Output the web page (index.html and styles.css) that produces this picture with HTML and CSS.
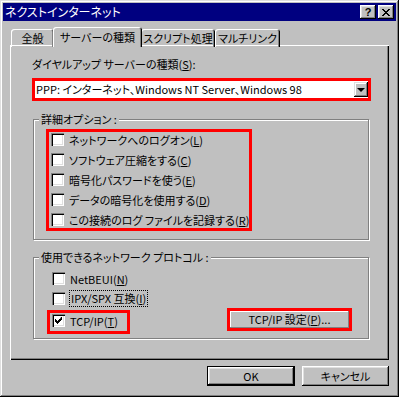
FILE: index.html
```html
<!DOCTYPE html>
<html lang="ja">
<head>
<meta charset="UTF-8">
<title>ネクストインターネット</title>
<link rel="stylesheet" href="styles.css">
</head>
<body>
<div class="window">
  <div class="titlebar">
    <span class="title">ネクストインターネット</span>
    <div class="caption-buttons">
      <span class="cap-btn help">?</span>
      <span class="cap-btn close">
        <svg width="8" height="7" viewBox="0 0 8 7"><path d="M0 0h2v1h1v1h2v-1h1v-1h2v1h-1v1h-1v1h-1v1h1v1h1v1h1v1h-2v-1h-1v-1h-2v1h-1v1h-2v-1h1v-1h1v-1h1v-1h-1v-1h-1v-1h-1z" fill="#000"/></svg>
      </span>
    </div>
  </div>

  <div class="tabs">
    <div class="tab tab-general">全般</div>
    <div class="tab tab-server active">サーバーの種類</div>
    <div class="tab tab-script">スクリプト処理</div>
    <div class="tab tab-multi">マルチリンク</div>
  </div>

  <div class="panel">
    <div class="field-label">ダイヤルアップ サーバーの種類(<u>S</u>):</div>
    <div class="combo mark">
      <span class="combo-text">PPP: インターネット、Windows NT Server、Windows 98</span>
      <span class="combo-arrow"><span class="tri"></span></span>
    </div>

    <fieldset class="group group-options">
      <legend>詳細オプション :</legend>
      <div class="option-list mark">
        <div class="check-row"><span class="checkbox"></span><span>ネットワークへのログオン(<u>L</u>)</span></div>
        <div class="check-row"><span class="checkbox"></span><span>ソフトウェア圧縮をする(<u>C</u>)</span></div>
        <div class="check-row"><span class="checkbox"></span><span>暗号化パスワードを使う(<u>E</u>)</span></div>
        <div class="check-row"><span class="checkbox"></span><span>データの暗号化を使用する(<u>D</u>)</span></div>
        <div class="check-row"><span class="checkbox"></span><span>この接続のログ ファイルを記録する(<u>R</u>)</span></div>
      </div>
    </fieldset>

    <fieldset class="group group-proto">
      <legend>使用できるネットワーク プロトコル :</legend>
      <div class="proto">
        <div class="proto-list">
          <div class="check-row indent"><span class="checkbox"></span><span>NetBEUI(<u>N</u>)</span></div>
          <div class="check-row indent"><span class="checkbox"></span><span class="focus">IPX/SPX 互換(<u>I</u>)</span></div>
          <div class="tcp-box mark">
            <div class="check-row"><span class="checkbox checked"><svg width="7" height="7" viewBox="0 0 7 7"><path d="M6 0h1v3h-1v1h-1v1h-1v1h-1v1h-1v-1h-1v-1h-1v-3h1v1h1v1h1v-1h1v-1h1z" fill="#000"/></svg></span><span>TCP/IP(<u>T</u>)</span></div>
          </div>
        </div>
        <div class="settings-btn mark"><span class="btn-inner">TCP/IP 設定(<u>P</u>)...</span></div>
      </div>
    </fieldset>
  </div>

  <div class="footer">
    <div class="btn default"><span>OK</span></div>
    <div class="btn">キャンセル</div>
  </div>
</div>
</body>
</html>
```

FILE: styles.css
```css
body {
margin: 0;
font-family: "Noto Sans CJK JP", "Liberation Sans", sans-serif;
font-size: 11px;
font-feature-settings: "palt";
color: #000;
background: #c0c0c0;
}

u {
text-decoration-thickness: 1px;
text-underline-offset: 1px;
}

.window {
width: 399px;
height: 397px;
box-sizing: border-box;
padding: 3px;
background: #c0c0c0;
box-shadow: inset -1px -1px #000, inset 1px 1px #dfdfdf, inset -2px -2px #808080, inset 2px 2px #fff;
}

.titlebar {
height: 18px;
background: #000080;
color: #fff;
display: flex;
align-items: center;
justify-content: space-between;
padding-left: 2px;
}

.title {
font-size: 12px;
line-height: 18px;
}

.caption-buttons {
display: flex;
gap: 2px;
margin-right: 2px;
}

.cap-btn {
width: 16px;
height: 14px;
box-sizing: border-box;
background: #c0c0c0;
color: #000;
display: flex;
align-items: center;
justify-content: center;
box-shadow: inset -1px -1px #000, inset 1px 1px #fff, inset -2px -2px #808080, inset 2px 2px #dfdfdf;
}

.help {
font-family: "Liberation Sans", sans-serif;
font-weight: bold;
font-size: 11px;
line-height: 14px;
}

/* タブ */
.tabs {
display: flex;
align-items: flex-end;
height: 20px;
margin: 6px 7px -2px 7px;
padding-left: 1px;
}

.tab {
height: 18px;
box-sizing: border-box;
text-align: center;
line-height: 16px;
padding-top: 1px;
white-space: nowrap;
border-radius: 3px 3px 0 0;
box-shadow: inset 1px 1px #fff, inset -1px 0 #000, inset -2px 0 #808080;
}

.tab.active {
height: 20px;
padding-top: 2px;
background: #c0c0c0;
position: relative;
z-index: 1;
}

.tab-general { width: 43px; margin-right: -1px; }
.tab-server { width: 89px; }
.tab-script { width: 74px; margin-left: -1px; }
.tab-multi { width: 65px; }

.panel {
height: 315px;
box-sizing: border-box;
margin: 0 7px;
padding: 12px 18px 0 22px;
box-shadow: inset 1px 1px #fff, inset -1px -1px #000, inset -2px -2px #808080;
}

.field-label {
line-height: 14px;
}

.mark {
border: 3px solid #f00;
box-sizing: border-box;
}

.combo {
height: 23px;
margin-top: 7px;
background: #fff;
display: flex;
align-items: center;
padding: 1px 0 1px 1px;
}

.combo-text {
flex: 1;
line-height: 15px;
white-space: nowrap;
}

.combo-arrow {
width: 14px;
height: 15px;
display: flex;
align-items: center;
justify-content: center;
background: #c0c0c0;
box-shadow: inset -1px -1px #000, inset 1px 1px #dfdfdf, inset -2px -2px #808080, inset 2px 2px #fff;
}

.tri {
width: 0;
height: 0;
border-left: 4px solid transparent;
border-right: 4px solid transparent;
border-top: 4px solid #000;
}

/* グループボックス */
.group {
margin: 0 2px 0 1px;
padding: 0;
border: 1px solid #808080;
box-shadow: inset 1px 1px #fff, 1px 1px #fff;
}

.group legend {
margin-left: 5px;
padding: 0 2px;
line-height: 14px;
background: #c0c0c0;
}

.group-options {
margin-top: 11px;
height: 128px;
box-sizing: border-box;
}

.option-list {
width: 206px;
height: 102px;
margin: 3px 0 0 12px;
padding: 1px 0 0 2px;
display: flex;
flex-direction: column;
gap: 7px;
}

.check-row {
display: flex;
align-items: center;
gap: 5px;
height: 13px;
line-height: 14px;
white-space: nowrap;
}

.checkbox {
width: 13px;
height: 13px;
flex: none;
box-sizing: border-box;
background: #fff;
display: flex;
align-items: center;
justify-content: center;
box-shadow: inset 1px 1px #808080, inset 2px 2px #000, inset -1px -1px #fff, inset -2px -2px #dfdfdf;
}

.group-proto {
margin-top: 10px;
height: 89px;
box-sizing: border-box;
}

.proto {
display: flex;
justify-content: space-between;
align-items: flex-end;
height: 74px;
padding-right: 16px;
}

.proto-list {
display: flex;
flex-direction: column;
gap: 7px;
margin-left: 13px;
padding-bottom: 4px;
}

.indent {
margin-left: 5px;
}

.focus {
outline: 1px dotted #000;
padding: 0 1px;
line-height: 15px;
}

.tcp-box {
width: 83px;
height: 24px;
margin-top: -2px;
padding: 1px 0 0 2px;
}

.settings-btn {
width: 125px;
height: 23px;
margin-bottom: 7px;
display: flex;
}

.btn-inner {
flex: 1;
text-align: center;
line-height: 17px;
box-shadow: inset -1px -1px #808080, inset 1px 1px #fff;
}

/* 下のボタン */
.footer {
display: flex;
justify-content: flex-end;
gap: 7px;
margin: 6px 7px 0 0;
}

.btn {
width: 87px;
height: 20px;
box-sizing: border-box;
text-align: center;
line-height: 20px;
box-shadow: inset -1px -1px #000, inset 1px 1px #fff, inset -2px -2px #808080, inset 2px 2px #dfdfdf;
}

.btn.default {
width: 88px;
border: 1px solid #000;
line-height: 18px;
box-shadow: inset -1px -1px #000, inset 1px 1px #fff, inset -2px -2px #808080, inset 2px 2px #dfdfdf;
}
```
